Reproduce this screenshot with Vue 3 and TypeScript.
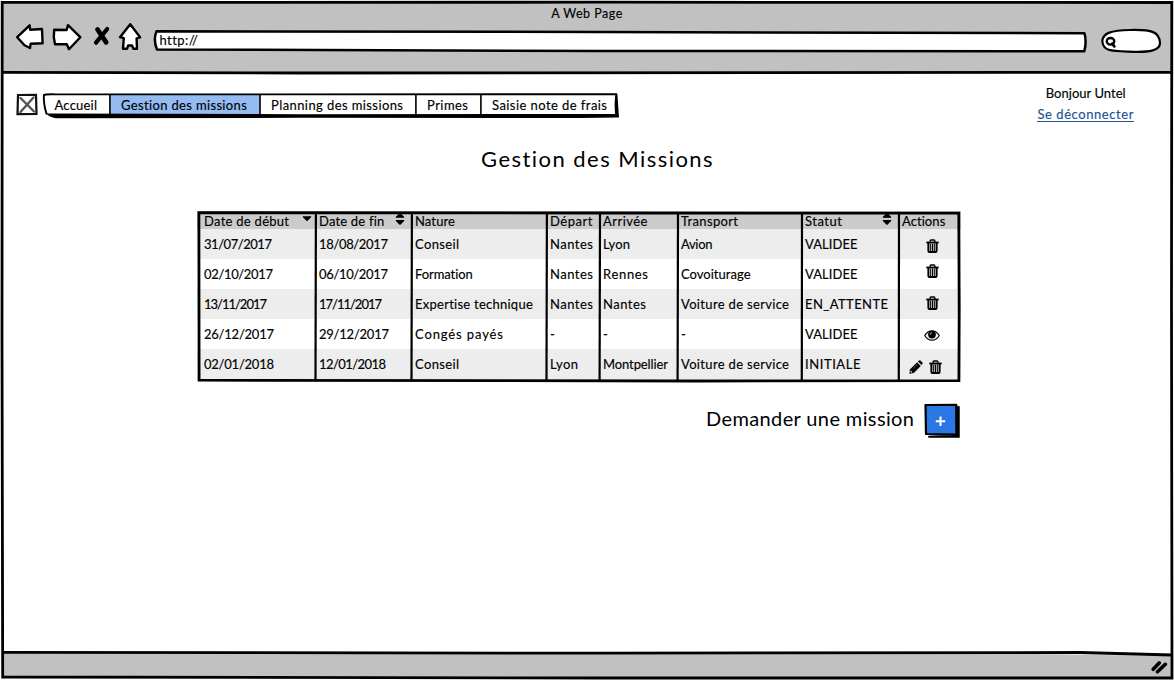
<script setup lang="ts">
import type { Directive } from 'vue'

interface Label { text: string; width: number }
interface Column extends Label { sort?: 'down' | 'both' }
interface Mission { cells: Label[]; actions: string[]; shift: number }

// Spreads the letters of a label so that it takes a given width.
const vFit: Directive<HTMLElement, number> = {
  mounted(el, binding) {
    const natural = el.getBoundingClientRect().width
    const count = (el.textContent ?? '').trim().length
    if (count > 1) el.style.letterSpacing = `${(binding.value - natural) / (count - 1)}px`
  },
}

const l = (text: string, width: number): Label => ({ text, width })

const tabs: Label[] = [
  l('Accueil', 42.5), l('Gestion des missions', 126), l('Planning des missions', 132),
  l('Primes', 41), l('Saisie note de frais', 115),
]

const columns: Column[] = [
  { text: 'Date de début', width: 85, sort: 'down' },
  { text: 'Date de fin', width: 65, sort: 'both' },
  l('Nature', 40), l('Départ', 42.5), l('Arrivée', 44.5), l('Transport', 57),
  { text: 'Statut', width: 37, sort: 'both' },
  l('Actions', 43.5),
]

const missions: Mission[] = [
  { cells: [l('31/07/2017', 68), l('18/08/2017', 69), l('Conseil', 44), l('Nantes', 43), l('Lyon', 27), l('Avion', 31.5), l('VALIDEE', 52.5)], actions: ['trash'], shift: 2 },
  { cells: [l('02/10/2017', 69), l('06/10/2017', 69), l('Formation', 58), l('Nantes', 43), l('Rennes', 45), l('Covoiturage', 69.5), l('VALIDEE', 52.5)], actions: ['trash'], shift: -3 },
  { cells: [l('13/11/2017', 63), l('17/11/2017', 63), l('Expertise technique', 118), l('Nantes', 43), l('Nantes', 43), l('Voiture de service', 108), l('EN_ATTENTE', 83)], actions: ['trash'], shift: -1 },
  { cells: [l('26/12/2017', 70), l('29/12/2017', 70), l('Congés payés', 88), l('-', 5), l('-', 5), l('-', 5), l('VALIDEE', 52.5)], actions: ['eye'], shift: 1.5 },
  { cells: [l('02/01/2018', 70), l('12/01/2018', 67), l('Conseil', 44), l('Lyon', 28), l('Montpellier', 65), l('Voiture de service', 108), l('INITIALE', 55.5)], actions: ['pencil', 'trash'], shift: 3 },
]

const dividers = [
  'M118.9 1L118.5 170', 'M214.9 1L214.5 170', 'M349.9 1L349.5 170', 'M403 1L402.6 170',
  'M481 1L480.6 170', 'M605 1L604.8 170', 'M702 1L701.8 170',
]
</script>

<template>
  <div class="window">
    <header class="chrome">
      <div class="caption"><span v-fit="71">A Web Page</span></div>
      <div class="toolbar">
        <svg class="buttons" width="140" height="34" viewBox="10 20 140 34">
          <g fill="#fff" stroke="#000" stroke-width="2.4" stroke-linejoin="round">
            <path d="M17.2 37.2L29.6 25.3L30.2 29.8L42 29L42.6 43.2L30.6 43.8L30 48L24.5 45.2Z" />
            <path d="M54.2 29.8L66.6 30L68 25.2L80.3 37.2L69 49.2L66.8 44.3L55 44.2Q53 37 54.2 29.8Z" />
            <path d="M130.2 24.2L140.2 37.4L136.6 38.4L137 48.8L133.4 48.8L132 45.5L128.2 45.5L127 48.8L123 48.8L123.8 38.2L120 37.2Z" />
          </g>
          <g stroke="#000" stroke-linecap="round">
            <path d="M97.5 29.5L106.2 42.3" stroke-width="4.8" />
            <path d="M107.2 29L96 42.7" stroke-width="4.2" />
          </g>
        </svg>
        <div class="address">
          <svg class="outline" width="934" height="24" viewBox="153 29 934 24">
            <path d="M156.5 31.3L600 32L1084.5 33.3Q1086.8 42 1084.3 51.3L600 51L157 49.5Q153 40 156.5 31.3Z" fill="#fff" stroke="#000" stroke-width="2.5" stroke-linejoin="round" />
          </svg>
          <span v-fit="38">http://</span>
        </div>
        <svg width="62" height="26" viewBox="1100 28 62 26">
          <path d="M1102.3 41C1103 33 1111 30.4 1130 30C1152 29.3 1159.5 32 1160 43C1160.2 50.5 1149 52.2 1134 51.8C1112 51 1103 52 1102.3 41Z" fill="#fff" stroke="#000" stroke-width="2.2" />
          <ellipse cx="1110.5" cy="41.3" rx="3.8" ry="3.3" fill="none" stroke="#000" stroke-width="2.3" />
          <path d="M1112.3 43.7L1114.3 46.3" stroke="#000" stroke-width="2.8" stroke-linecap="round" />
        </svg>
      </div>
    </header>

    <main class="page">
      <div class="top">
        <svg class="logo" width="22" height="23" viewBox="0 0 22 23">
          <path d="M2 2L20 1.8L20.5 21L1.5 21.2Z" fill="#fff" stroke="#111" stroke-width="2.2" />
          <path d="M4.5 5L18 18.5M17.5 4.5L4.5 19" stroke="#555" stroke-width="2.4" stroke-linecap="round" />
        </svg>
        <nav class="tabs">
          <span v-for="(tab, i) in tabs" :key="tab.text" class="tab" :class="{ active: i === 1 }">
            <span v-fit="tab.width">{{ tab.text }}</span>
          </span>
          <svg class="tabs-lines" width="577" height="27" viewBox="42 92 577 27">
            <path d="M43.5 95.5Q45 94 56 94.4L617 94.2" fill="none" stroke="#000" stroke-width="1.9" />
            <path d="M43.9 94.5Q43.2 104 46.8 114.5" fill="none" stroke="#000" stroke-width="1.9" />
            <path d="M46 113.5L300 114.2L615 114L614.6 104L615.3 93.5L617.4 94L619 117.5L580 118L300 117.8L56 118.3Q49 117 46 113.5Z" fill="#000" />
            <path d="M109.9 94V115M260 94V115M415.9 94V115M480.9 94V116" stroke="#000" stroke-width="1.6" />
          </svg>
        </nav>
        <div class="user">
          <span><span v-fit="80">Bonjour Untel</span></span>
          <a class="logout"><span v-fit="96">Se déconnecter</span></a>
        </div>
      </div>

      <h1 class="title"><span v-fit="232">Gestion des Missions</span></h1>

      <section class="missions">
        <div class="row head">
          <div v-for="col in columns" :key="col.text" class="cell">
            <span v-fit="col.width">{{ col.text }}</span>
            <svg v-if="col.sort" class="sort" :class="col.sort" width="12" height="14" viewBox="0 0 12 14">
              <path v-if="col.sort === 'down'" d="M2 4.8H10L6 8.8Z" stroke="#000" stroke-linejoin="round" />
              <path v-else d="M6 1.6L9.7 5.2H2.3ZM2.3 8.6H9.7L6 12.2Z" stroke="#000" stroke-width="1.2" stroke-linejoin="round" />
            </svg>
          </div>
        </div>
        <div v-for="(mission, r) in missions" :key="r" class="row">
          <div v-for="(cell, c) in mission.cells" :key="c" class="cell"><span v-fit="cell.width">{{ cell.text }}</span></div>
          <div class="actions" :class="{ pair: mission.actions.length > 1 }" :style="{ transform: `translateY(${mission.shift}px)` }">
            <template v-for="action in mission.actions" :key="action">
              <svg v-if="action === 'trash'" width="13" height="14" viewBox="0 0 13 14">
                <path d="M.3 3.5H12.7" stroke="#000" stroke-width="1.8" />
                <path d="M4.1 3V1.9Q4.1 1 5 1H8Q8.9 1 8.9 1.9V3" fill="none" stroke="#000" stroke-width="1.3" />
                <path d="M2.4 3.5V11.7Q2.4 12.9 3.4 12.9H9.6Q10.6 12.9 10.6 11.7V3.5" fill="none" stroke="#000" stroke-width="2" />
                <path d="M4.7 4.5V12M6.5 4.5V12M8.3 4.5V12" stroke="#000" stroke-width="1.1" />
              </svg>
              <svg v-else-if="action === 'eye'" width="16" height="12" viewBox="0 0 16 12">
                <path d="M.7 6Q3.7 1.3 8 1.3T15.3 6Q12.3 10.7 8 10.7T.7 6Z" fill="#fff" stroke="#000" stroke-width="1.2" />
                <circle cx="8" cy="5.1" r="3.9" />
                <path d="M6.1 5.2Q6.1 3.3 8 3.2" fill="none" stroke="#fff" stroke-width=".7" />
              </svg>
              <svg v-else width="14" height="14" viewBox="0 0 14 14">
                <path d="M.3 13.7L1.1 9.2L8.1 2.2L11.8 5.9L4.8 12.9Z" />
                <path d="M8.9 1.5L10 .5Q10.7 0 11.4 .6L13.4 2.6Q14 3.3 13.4 4L12.5 5.1Z" />
                <path d="M1.9 10.9L3.1 12.1L2 12.4L1.6 12ZM4.2 8.4L8 4.6" fill="#eee" stroke="#eee" stroke-width=".4" />
              </svg>
            </template>
          </div>
        </div>
        <svg class="grid-lines" width="764" height="172" viewBox="0 0 764 172">
          <path d="M1.9 1.7L400 2L761.8 2.1L762.2 100L761.9 169.6L500 170L2.1 169.2L2 90Z" fill="none" stroke="#000" stroke-width="2.8" />
          <path v-for="d in dividers" :key="d" :d="d" stroke="#000" stroke-width="2.2" />
        </svg>
      </section>

      <div class="request">
        <span v-fit="208">Demander une mission</span>
        <button class="add" type="button" aria-label="Demander une mission">
          <svg width="36" height="35" viewBox="0 0 36 35">
            <path d="M4.5 33L32.5 32V3L35.5 3.5V34.5H4.5Z" fill="#000" stroke="#000" stroke-width=".5" />
            <path d="M1.5 2L32.2 1.8L32.4 31.5L2 31Z" fill="#2b78e4" stroke="#000" stroke-width="2.2" stroke-linejoin="round" />
            <path d="M16.5 13.5V23M11.8 18.2H21.2" stroke="#fff" stroke-width="2" />
          </svg>
        </button>
      </div>
    </main>

    <footer class="status">
      <svg width="17" height="14" viewBox="0 0 17 14">
        <path d="M2.2 9.3L8.2 2.9M6.5 11.8L14.3 4.3" stroke="#000" stroke-width="3.6" stroke-linecap="round" />
      </svg>
    </footer>

    <svg class="frame" width="1174" height="680" viewBox="0 0 1174 680">
      <path d="M1000 653.5L1171 656V652H1000Z" fill="#fff" />
      <g fill="none" stroke="#000" stroke-width="2.8">
        <path d="M2.2 2.4L600 2.2L1171.8 2.5L1171.5 300L1172 678L600 678L2.7 677L2 340Z" />
        <path d="M2 72.4L300 73L1172 72.3M2 652.3L600 653.2L1080 652.5L1172 655" />
      </g>
    </svg>
  </div>
</template>

<style>
body { margin: 0; background: #fff; }
</style>

<style scoped>
.window {
  position: relative;
  display: flex;
  flex-direction: column;
  box-sizing: border-box;
  width: 1174px;
  height: 680px;
  padding: 2px;
  overflow: hidden;
  font: 13px/16px Lato, "Noto Sans", sans-serif;
  color: #000;
  -webkit-text-stroke: 0.15px currentColor;
}
.window span { white-space: nowrap; }
span { display: inline-block; }
svg { display: block; flex: none; }
.frame { position: absolute; inset: 0; pointer-events: none; }

.chrome { height: 71px; background: #c1c1c1; }
.caption { box-sizing: border-box; height: 21px; padding-top: 4px; text-align: center; font-size: 12.5px; }
.toolbar { display: flex; align-items: flex-start; padding-left: 8px; margin-top: -3px; }
.buttons { margin-right: 3px; }
.address {
  position: relative;
  width: 934px;
  height: 24px;
  margin: 9px 13px 0 0;
}
.address > span { position: relative; margin: 3px 0 0 6.5px; }
.outline { position: absolute; inset: 0; }
.toolbar > svg:last-child { margin-top: 8px; }

.page { flex: 1; background: #fff; }
.top { display: flex; height: 57px; padding: 19px 38px 0 14px; box-sizing: border-box; }
.logo { margin: 1px 4px 0 0; }
.tabs { position: relative; display: flex; width: 577px; height: 27px; }
.tab { display: flex; box-sizing: border-box; height: 21px; margin-top: 2px; padding: 3px 0 0 11px; }
.tab:nth-child(1) { width: 68px; padding-left: 12.5px; }
.tab:nth-child(2) { width: 150px; }
.tab:nth-child(3) { width: 156px; }
.tab:nth-child(4) { width: 65px; }
.tab:nth-child(5) { width: 134px; }
.tab.active { background: #94bbf2; }
.tabs-lines { position: absolute; inset: 0; }
.user { display: flex; flex-direction: column; align-items: center; margin: -7px 0 0 auto; }
.logout { margin-top: 5px; height: 15px; border-bottom: 1px solid #1d5391; color: #1d5391; }

.title {
  margin: 15px 0 0 479px;
  font-size: 22px;
  line-height: 28px;
  font-weight: 400;
  -webkit-text-stroke: 0;
}

.missions { position: relative; width: 764px; height: 172px; margin: 38px 0 0 195px; }
.row {
  display: grid;
  grid-template-columns: 118px 96px 135px 53px 78px 124px 97px 63px;
  height: 30px;
}
.row:nth-child(even) { background: #ededed; }
.head { height: 18px; background: #cbcbcb; }
.cell { display: flex; padding: 7px 0 0 4px; min-width: 0; }
.cell:first-child { padding-left: 7px; }
.head .cell { padding-top: 2px; }
.sort { margin: -1px 5.5px 0 auto; }
.sort.down { margin-right: 2.5px; }
.actions { display: flex; align-items: center; justify-content: center; padding-left: 5px; }
.pair { gap: 6px; padding: 0 9px 0 0; }
.grid-lines { position: absolute; inset: 0; }

.request { display: flex; margin: 20px 0 0 704px; font-size: 20px; line-height: 26px; -webkit-text-stroke: 0; }
.request > span { margin-top: 2px; }
.add { margin: 0 0 0 10px; padding: 0; border: 0; background: none; }

.status { display: flex; justify-content: flex-end; box-sizing: border-box; height: 26px; padding: 8px 4px 0 0; background: #c1c1c1; }
</style>
